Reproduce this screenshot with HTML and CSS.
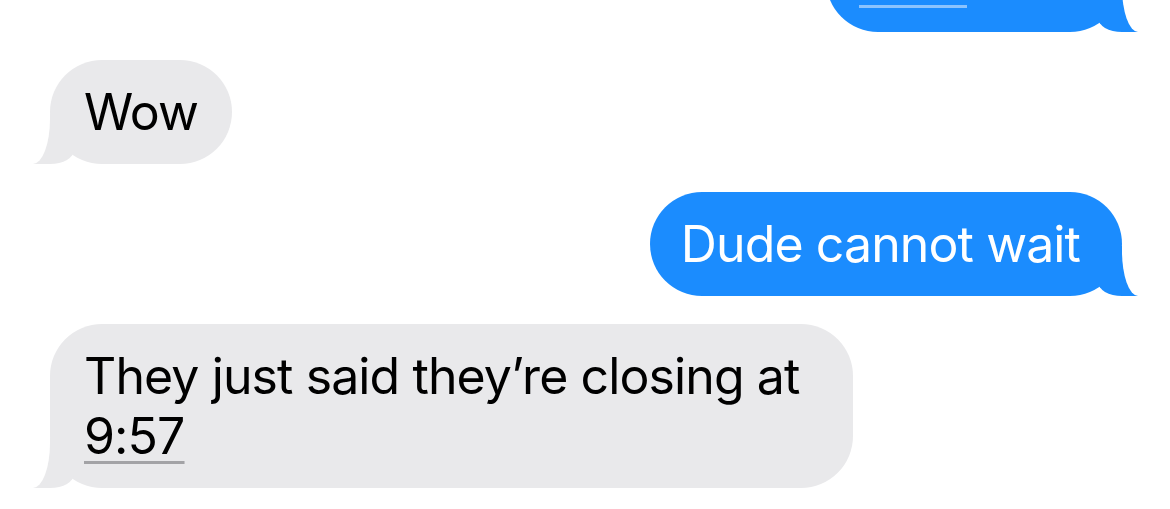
FILE: index.html
```html
<!DOCTYPE html>
<html lang="en">
<head>
<meta charset="utf-8">
<title>Messages</title>
<link rel="stylesheet" href="styles.css">
</head>
<body>
<div class="thread">
  <div class="msg sent cut"><div class="link-rule"></div></div>
  <div class="msg received">Wow</div>
  <div class="msg sent">Dude cannot wait</div>
  <div class="msg received">They just said they’re closing at <span class="link link-received">9:57</span></div>
</div>
</body>
</html>
```
FILE: styles.css
```css
html, body {
  margin: 0;
  background: #ffffff;
}
body {
  font-family: Inter, "Noto Sans", sans-serif;
  overflow: hidden;
  height: 509px;
}
.thread {
  display: flex;
  flex-direction: column;
  gap: 28px;
  padding: 0 48px 0 50px;
}
.msg {
  position: relative;
  box-sizing: border-box;
  max-width: 803px;
  border-radius: 52px;
  font-size: 50px;
  line-height: 60px;
  letter-spacing: -0.9px;
}
.msg::before,
.msg::after {
  content: "";
  position: absolute;
  bottom: 0;
}
.received {
  align-self: flex-start;
  background: #e9e9eb;
  color: #000000;
  padding: 22px 34px 22px 34px;
}
.received::before {
  left: -17px;
  width: 41px;
  height: 50px;
  background: #e9e9eb;
  border-bottom-right-radius: 24px 14px;
}
.received::after {
  left: -40px;
  width: 40px;
  height: 60px;
  background: #ffffff;
  border-bottom-right-radius: 17px 45px;
}
.sent {
  align-self: flex-end;
  background: #1b8cfe;
  color: #ffffff;
  padding: 22px 42px 22px 31px;
}
.sent::before {
  right: -16px;
  width: 40px;
  height: 50px;
  background: #1b8cfe;
  border-bottom-left-radius: 24px 14px;
}
.sent::after {
  right: -40px;
  width: 40px;
  height: 60px;
  background: #ffffff;
  border-bottom-left-radius: 16px 45px;
}
.cut {
  width: 296px;
  margin-top: -72px;
  padding: 77px 43px 24px 33px;
}
.link-rule {
  width: 108px;
  height: 3px;
  background: #8cc3fd;
}
.link {
  text-decoration: underline;
  text-decoration-thickness: 3px;
  text-underline-offset: 7px;
}
.link-received {
  text-decoration-color: #a3a3a6;
}
```
